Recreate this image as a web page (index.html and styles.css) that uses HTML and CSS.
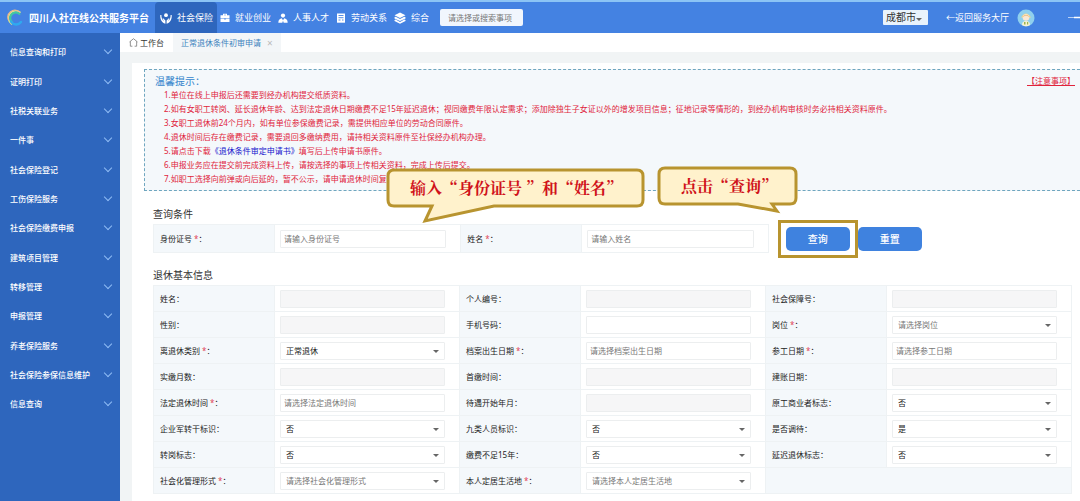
FILE: index.html
```html
<!DOCTYPE html>
<html lang="zh-CN">
<head>
<meta charset="utf-8">
<title>四川人社在线公共服务平台</title>
<link rel="stylesheet" href="styles.css">
</head>
<body>
<header class="topbar">
  <div class="brand">
    <svg class="logo" viewBox="0 0 16 18" aria-hidden="true">
      <g fill="none" stroke-linecap="round">
        <path d="M13 3.200A7 7 0 0 0 4.500 15" stroke="#dbe58a" stroke-width="1.500"/>
        <path d="M12 2.500A7 7 0 0 0 1.500 11" stroke="#f0b989" stroke-width="1.200"/>
        <path d="M12.500 5A5 5 0 0 0 5 13" stroke="#42c9a0" stroke-width="2"/>
        <path d="M4 12.500A6 6 0 0 0 14 13" stroke="#2fa9ef" stroke-width="2.400"/>
      </g>
    </svg>
    <span class="brand-name">四川人社在线公共服务平台</span>
  </div>
  <nav class="nav">
    <a class="nav-item active" href="#">
      <svg class="nav-icon big" viewBox="0 0 12 12" fill="#fff" aria-hidden="true"><circle cx="6" cy="3.200" r="1.900"/><path d="M0.300 3C0 7 1.500 10.500 5.400 11.700V8.500L3.200 6.200 2.500 6.800 4 9C2 8 1.300 5.500 1.400 3zM11.700 3C12 7 10.500 10.500 6.600 11.700V8.500L8.800 6.200 9.500 6.800 8 9C10 8 10.700 5.500 10.600 3z"/></svg>
      <span>社会保险</span></a>
    <a class="nav-item" href="#">
      <svg class="nav-icon" viewBox="0 0 10 10" fill="#fff" aria-hidden="true"><path d="M3 2.200V0.800H7V2.200H9.500V5.200H0.500V2.200zM4 2.200H6V1.700H4zM0.500 5.800H4.200V6.500H5.800V5.800H9.500V9H0.500z"/></svg>
      <span>就业创业</span></a>
    <a class="nav-item" href="#">
      <svg class="nav-icon" viewBox="0 0 10 10" fill="#fff" aria-hidden="true"><circle cx="5" cy="2.600" r="2.100"/><path d="M0.300 9.700C0.300 6.500 2 5.500 3.700 5.200L5 7.200 6.300 5.200C8 5.500 9.700 6.500 9.700 9.700H5.700L5 7.800 4.300 9.700z"/></svg>
      <span>人事人才</span></a>
    <a class="nav-item" href="#">
      <svg class="nav-icon" viewBox="0 0 10 10" aria-hidden="true"><path d="M1 0.500H9V9.700H1z" fill="#fff"/><path d="M2.500 2.500H7.500M2.500 4.700H7.500M2.500 7H4.500M6 7H7.500" stroke="#4482e2" stroke-width="0.900"/></svg>
      <span>劳动关系</span></a>
    <a class="nav-item" href="#">
      <svg class="nav-icon big" viewBox="0 0 12 12" fill="#fff" aria-hidden="true"><path d="M6 0.500L11.500 3.300 6 6.100 0.500 3.300zM0.500 5.300L1.700 4.800 6 7 10.300 4.800 11.500 5.300V6.400L6 9.100 0.500 6.400zM0.500 8L1.700 7.600 6 9.900 10.300 7.600 11.500 8V8.900L6 11.700 0.500 8.900z"/></svg>
      <span>综合</span></a>
  </nav>
  <input class="search" type="text" placeholder="请选择或搜索事项" aria-label="搜索事项">
  <div class="topbar-right">
    <div class="city"><select aria-label="城市"><option>成都市</option></select></div>
    <a class="back" href="#">←返回服务大厅</a>
    <svg class="avatar" viewBox="0 0 18 18" aria-hidden="true"><circle cx="9" cy="9" r="8.500" fill="#8fd0ee"/><path d="M4 8.500Q9 0.500 14 8.500Z" fill="#f2d78b"/><circle cx="9" cy="8.500" r="3.300" fill="#fbe8d2"/><path d="M5 8Q9 4 13 8L9 6.500Z" fill="#e5ad64"/><path d="M5 16Q5 12 9 12T13 16Q9 18.500 5 16Z" fill="#f6f2d2"/><path d="M7 13H8.500V15.500H7zM10 13H11.200V15.500H10z" fill="#9cb24e"/></svg>
    <svg class="more" viewBox="0 0 12 6" aria-hidden="true"><path d="M0 2.500H12" stroke="#d6e6fb" stroke-width="0.800"/><path d="M6 2.500H12" stroke="#fff" stroke-width="1.500"/></svg>
  </div>
</header>

<div class="layout">
  <aside class="sidebar">
    <ul class="menu">
      <li><a href="#">信息查询和打印</a></li>
      <li><a href="#">证明打印</a></li>
      <li><a href="#">社税关联业务</a></li>
      <li><a href="#">一件事</a></li>
      <li><a href="#">社会保险登记</a></li>
      <li><a href="#">工伤保险服务</a></li>
      <li><a href="#">社会保险缴费申报</a></li>
      <li><a href="#">建筑项目管理</a></li>
      <li><a href="#">转移管理</a></li>
      <li><a href="#">申报管理</a></li>
      <li><a href="#">养老保险服务</a></li>
      <li><a href="#">社会保险参保信息维护</a></li>
      <li><a href="#">信息查询</a></li>
    </ul>
  </aside>

  <main class="main">
    <div class="tabs">
      <a class="tab" href="#"><svg class="home" viewBox="0 0 8 8" fill="none" stroke="#777" stroke-width="0.700" aria-hidden="true"><path d="M0.500 3.500L4 0.600 7.500 3.500M1.200 3V7.300H3M5 7.300H6.800V3"/></svg>工作台</a>
      <a class="tab current" href="#">正常退休条件初审申请<span class="close">×</span></a>
    </div>

    <div class="panel">
      <section class="notice">
        <div class="notice-head"><h2>温馨提示：</h2><a class="attention" href="#">【注意事项】</a></div>
        <p>1.单位在线上申报后还需要到经办机构提交纸质资料。</p>
        <p>2.如有女职工转岗、延长退休年龄、达到法定退休日期缴费不足15年延迟退休；视同缴费年限认定需求；添加除独生子女证以外的增发项目信息；征地记录等情形的，到经办机构审核时务必持相关资料原件。</p>
        <p>3.女职工退休前24个月内，如有单位参保缴费记录，需提供相应单位的劳动合同原件。</p>
        <p>4.退休时间后存在缴费记录，需要退回多缴纳费用，请持相关资料原件至社保经办机构办理。</p>
        <p>5.请点击下载<a href="#">《退休条件审定申请书》</a>填写后上传申请书原件。</p>
        <p>6.申报业务应在提交前完成资料上传，请按选择的事项上传相关资料，完成上传后提交。</p>
        <p>7.如职工选择向前弹或向后延的，暂不公示，请申请退休时间复审</p>
      </section>

      <form class="form">
        <h3>查询条件</h3>
        <div class="query">
          <table class="grid query-grid">
            <tr>
              <th><label for="idno">身份证号<i>*</i>：</label></th><td><input id="idno" type="text" placeholder="请输入身份证号"></td>
              <th><label for="qname">姓名<i>*</i>：</label></th><td><input id="qname" type="text" placeholder="请输入姓名"></td>
            </tr>
          </table>
          <div class="spot"><button type="button">查询</button></div>
          <button type="button">重置</button>
        </div>

        <h3 class="second">退休基本信息</h3>
        <table class="grid info">
          <tr>
            <th><label for="f1">姓名：</label></th><td><input id="f1" type="text" disabled></td>
            <th><label for="f2">个人编号：</label></th><td><input id="f2" type="text" disabled></td>
            <th><label for="f3">社会保障号：</label></th><td><input id="f3" type="text" disabled></td>
          </tr>
          <tr>
            <th><label for="f4">性别：</label></th><td><input id="f4" type="text" disabled></td>
            <th><label for="f5">手机号码：</label></th><td><input id="f5" type="text"></td>
            <th><label for="f6">岗位<i>*</i>：</label></th><td><div class="pick"><select id="f6" class="empty"><option>请选择岗位</option></select></div></td>
          </tr>
          <tr>
            <th><label for="f7">离退休类别<i>*</i>：</label></th><td><div class="pick"><select id="f7"><option>正常退休</option></select></div></td>
            <th><label for="f8">档案出生日期<i>*</i>：</label></th><td><input id="f8" type="text" placeholder="请选择档案出生日期"></td>
            <th><label for="f9">参工日期<i>*</i>：</label></th><td><input id="f9" type="text" placeholder="请选择参工日期"></td>
          </tr>
          <tr>
            <th><label for="f10">实缴月数：</label></th><td><input id="f10" type="text" disabled></td>
            <th><label for="f11">首缴时间：</label></th><td><input id="f11" type="text" disabled></td>
            <th><label for="f12">建账日期：</label></th><td><input id="f12" type="text" disabled></td>
          </tr>
          <tr>
            <th><label for="f13">法定退休时间<i>*</i>：</label></th><td><input id="f13" type="text" placeholder="请选择法定退休时间"></td>
            <th><label for="f14">待遇开始年月：</label></th><td><input id="f14" type="text" disabled></td>
            <th><label for="f15">原工商业者标志：</label></th><td><div class="pick"><select id="f15"><option>否</option></select></div></td>
          </tr>
          <tr>
            <th><label for="f16">企业军转干标识：</label></th><td><div class="pick"><select id="f16"><option>否</option></select></div></td>
            <th><label for="f17">九类人员标识：</label></th><td><div class="pick"><select id="f17"><option>否</option></select></div></td>
            <th><label for="f18">是否调待：</label></th><td><div class="pick"><select id="f18"><option>是</option></select></div></td>
          </tr>
          <tr>
            <th><label for="f19">转岗标志：</label></th><td><div class="pick"><select id="f19"><option>否</option></select></div></td>
            <th><label for="f20">缴费不足15年：</label></th><td><div class="pick"><select id="f20"><option>否</option></select></div></td>
            <th><label for="f21">延迟退休标志：</label></th><td><div class="pick"><select id="f21"><option>否</option></select></div></td>
          </tr>
          <tr>
            <th><label for="f22">社会化管理形式<i>*</i>：</label></th><td><div class="pick"><select id="f22" class="empty"><option>请选择社会化管理形式</option></select></div></td>
            <th><label for="f23">本人定居生活地<i>*</i>：</label></th><td><div class="pick"><select id="f23" class="empty"><option>请选择本人定居生活地</option></select></div></td>
            <td class="blank" colspan="2"></td>
          </tr>
        </table>
      </form>
    </div>
  </main>
</div>

<div class="callout callout-input">
  <svg viewBox="0 0 260 56" aria-hidden="true"><path d="M8 2H251Q257 2 257 8V32Q257 38 251 38H108L39 53 46 38H8Q2 38 2 32V8Q2 2 8 2Z"/></svg>
  <span>输入“身份证号 ”和“姓名”</span>
</div>
<div class="callout callout-click">
  <svg viewBox="0 0 142 48" aria-hidden="true"><path d="M8 2H133Q139 2 139 8V32Q139 38 133 38H115L120 45 81 38H8Q2 38 2 32V8Q2 2 8 2Z"/></svg>
  <span>点击“查询”</span>
</div>
</body>
</html>
```
FILE: styles.css
```css
* { box-sizing: border-box; }
body {
  margin: 0;
  min-height: 100vh;
  display: flex;
  flex-direction: column;
  position: relative;
  overflow: hidden;
  font: 8px/14px "Noto Sans", "Noto Sans CJK SC", sans-serif;
  color: #333;
  background: #f1f4f5;
}
a { color: inherit; text-decoration: none; }
h2, h3, p, ul { margin: 0; padding: 0; }
input, select, button { font: inherit; color: inherit; margin: 0; }
select { appearance: none; }

.topbar {
  display: flex;
  align-items: center;
  height: 33px;
  border-top: 2px solid #8cc4f5;
  background: #4482e2;
  color: #fff;
}
.brand { display: flex; align-items: center; gap: 6px; padding-left: 7px; width: 155px; flex: none; }
.logo { width: 16px; height: 18px; }
.brand-name { font-size: 10px; font-weight: 700; white-space: nowrap; }
.nav { display: flex; align-self: stretch; gap: 7px; font-size: 9px; }
.nav-item { display: flex; align-items: center; gap: 5px; white-space: nowrap; }
.nav-item.active { padding: 0 4px 0 5px; margin-right: -4px; border-radius: 4px 4px 0 0; background: #2e66bd; }
.nav-icon { width: 10px; height: 10px; }
.nav-icon.big { width: 12px; height: 12px; }
.search { width: 83px; height: 17px; margin-left: 11px; padding: 0 8px; border: 0; border-radius: 2px; background: #f1f6fd; }
::placeholder { color: #777; opacity: 1; }
.topbar-right { display: flex; align-items: center; margin-left: auto; }
.city { position: relative; }
.city select { width: 45px; height: 15px; padding: 0 3px; border: 0; border-radius: 1px; background: #e9f3fc; color: #333; font-size: 10px; line-height: 15px; }
.city::after, .pick::after {
  content: "";
  position: absolute;
  right: 6px;
  top: 8px;
  border: 3px solid transparent;
  border-top-color: #666;
  border-bottom: 0;
  pointer-events: none;
}
.back { margin-left: 18px; font-size: 9px; }
.avatar { width: 18px; height: 18px; margin: 0 33px 0 8px; }
.more { width: 12px; height: 6px; }

.layout { display: flex; flex: 1; }
.sidebar { width: 120px; flex: none; background: #2e66bd; color: #fff; }
.menu { list-style: none; padding-top: 4px; }
.menu a { display: flex; align-items: center; justify-content: space-between; height: 29px; padding: 0 9px 0 10px; font-weight: 500; }
.menu li:nth-child(3n + 1) a { height: 30px; }
.menu a::after { content: ""; width: 5px; height: 5px; margin-bottom: 4px; border: solid #8fbcf5; border-width: 0 1px 1px 0; transform: rotate(45deg); }

.main { flex: 1; min-width: 0; display: flex; flex-direction: column; }
.tabs { display: flex; height: 19px; background: #fff; }
.tab { display: flex; align-items: center; padding: 0 9px; color: #333; }
.home { width: 9px; height: 9px; margin-right: 2px; }
.tab.current { padding: 0 8px; background: #f3f6f8; color: #3d82bd; }
.close { margin-left: 6px; font-size: 10px; color: #bbb; }

.panel { flex: 1; margin: 11px 0 0 12px; padding-top: 6px; background: #fff; }
.notice { margin-left: 12px; padding: 4px 5px 4px 10px; border: 1px dashed #6fa6bf; border-right: 0; background: #f4f8fb; color: #e0243c; }
.notice-head { display: flex; justify-content: space-between; }
.notice h2 { font-size: 10px; font-weight: 400; color: #3384cc; }
.attention { text-decoration: underline; }
.notice p { padding-left: 9px; white-space: nowrap; }
.notice p a { color: #1414cc; }

.form { padding: 16px 8px 6px 21px; }
.form h3 { font-size: 10px; font-weight: 400; padding-bottom: 3px; }
.form h3.second { padding-top: 15px; }
.grid { width: 100%; border-collapse: collapse; table-layout: fixed; }
.grid th, .grid td { height: 26px; padding: 0; border: 1px solid #eef2f4; }
.grid th { width: 121px; padding-left: 6px; background: #f4f8fb; font-weight: 400; text-align: left; white-space: nowrap; color: #222; }
.grid td { padding: 0 14px 0 5px; }
.grid td.blank { background: #f4f8fb; }
.grid i { margin-left: 2px; font-style: normal; color: #e0455a; }
.grid input, .grid select { display: block; width: 100%; height: 18px; padding: 0 3px; border: 1px solid #eceeef; border-radius: 1px; background: #fff; }
.grid input:disabled { background: #f6f6f7; }
.grid select { padding: 0 5px; color: #222; }
.grid select.empty { color: #777; }
.pick { position: relative; }
.query { display: flex; align-items: center; }
.query-grid { width: 67%; }
.query-grid th, .query-grid td { height: 28px; }
.query button { width: 64px; height: 24px; padding: 0; border: 0; border-radius: 5px; background: #3f82df; color: #fff; font-size: 10px; font-weight: 500; }
.spot { margin: -6px 0 -6px 9px; padding: 4px 5px; border: 3px solid #b8942f; }

.callout { position: absolute; font: 700 16px/20px "Noto Serif CJK SC", "Noto Sans CJK SC", serif; color: #d0121b; white-space: nowrap; }
.callout svg { display: block; width: 100%; }
.callout path { fill: #fff2cc; stroke: #b8942f; stroke-width: 3; stroke-linejoin: miter; }
.callout span { position: absolute; top: 10px; left: 24px; }
.callout-input { left: 386px; top: 168px; width: 260px; }
.callout-click { left: 657px; top: 166px; width: 142px; }
```
